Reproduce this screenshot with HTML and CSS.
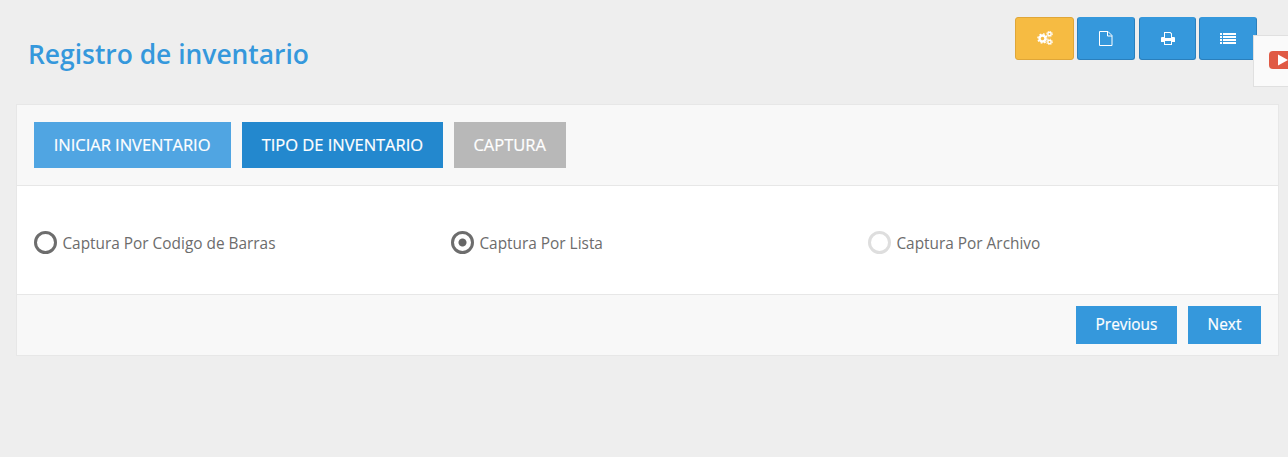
FILE: index.html
```html
<!DOCTYPE html>
<html lang="es">
<head>
  <meta charset="UTF-8" />
  <title>Registro de inventario</title>
  <link rel="stylesheet" href="styles.css">
</head>
<body>
  <div class="page-head">
    <h1 class="page-title">Registro de inventario</h1>
    <div class="head-actions">
      <button class="icon-btn icon-btn-warning btn-cogs">
        <svg width="16" height="14" viewBox="0 0 16 14" fill="none" stroke="#fff">
          <circle cx="5.5" cy="7.5" r="3" stroke-width="2.4"/>
          <circle cx="5.5" cy="7.5" r="4.6" stroke-width="1.4" stroke-dasharray="1.8 1.8"/>
          <circle cx="12.5" cy="3" r="1.7" stroke-width="1.5"/>
          <circle cx="12.5" cy="3" r="2.9" stroke-width="1" stroke-dasharray="1.2 1.1"/>
          <circle cx="12.5" cy="11" r="1.7" stroke-width="1.5"/>
          <circle cx="12.5" cy="11" r="2.9" stroke-width="1" stroke-dasharray="1.2 1.1"/>
        </svg>
      </button>
      <button class="icon-btn btn-file">
        <svg width="14" height="15" viewBox="0 0 14 15" fill="none" stroke="#fff" stroke-width="1">
          <path d="M.5 .5h8.500l4 4v10h-12.500z"/>
          <path d="M8.500 .5v4.500h4.500"/>
        </svg>
      </button>
      <button class="icon-btn btn-print">
        <svg width="14" height="13" viewBox="0 0 14 13" fill="#fff">
          <path d="M3 0h6.500l1.500 1.500v3.500h2a1 1 0 0 1 1 1v4h-3v3h-8v-3h-3v-4a1 1 0 0 1 1-1h2zM4 1v5h6v-4l-1-1zM4 9v3h6v-3z" fill-rule="evenodd"/>
        </svg>
      </button>
      <button class="icon-btn btn-list">
        <svg width="16" height="11" viewBox="0 0 16 11" fill="#fff">
          <path d="M0 0h2v2h-2zM3 0h13v2h-13zM0 3h2v2h-2zM3 3h13v2h-13zM0 6h2v2h-2zM3 6h13v2h-13zM0 9h2v2h-2zM3 9h13v2h-13z"/>
        </svg>
      </button>
    </div>
  </div>

  <!-- Video help tab -->
  <div class="video-tab">
    <svg width="24" height="18" viewBox="0 0 24 18">
      <rect width="24" height="18" rx="4" fill="#e05a45"/>
      <path d="M9 3.500l10 5.500-10 5.500z" fill="#fff"/>
    </svg>
  </div>

  <div class="panel">
    <div class="panel-tabs">
      <a href="#" class="tab tab-done">INICIAR INVENTARIO</a>
      <a href="#" class="tab tab-current">TIPO DE INVENTARIO</a>
      <a href="#" class="tab tab-disabled">CAPTURA</a>
    </div>

    <div class="panel-body">
      <label class="radio-item">
        <span class="radio"></span>
        Captura Por Codigo de Barras
      </label>
      <label class="radio-item">
        <span class="radio radio-checked"></span>
        Captura Por Lista
      </label>
      <label class="radio-item">
        <span class="radio radio-disabled"></span>
        Captura Por Archivo
      </label>
    </div>

    <div class="panel-footer">
      <a href="#" class="nav-btn">Previous</a>
      <a href="#" class="nav-btn btn-next">Next</a>
    </div>
  </div>
</body>
</html>
```

FILE: styles.css
```css
* {
  margin: 0;
  padding: 0;
  box-sizing: border-box;
}

body {
  font-family: "Open Sans", "Noto Sans", sans-serif;
  background-color: #eeeeee;
  height: 457px;
  overflow: hidden;
  position: relative;
  padding: 0 9px 0 16px;
}

a {
  text-decoration: none;
}

.page-head {
  display: flex;
  justify-content: space-between;
  align-items: flex-start;
  height: 104px;
  padding: 17px 22px 0 12px;
}

.page-title {
  font-size: 26.400px;
  line-height: 36px;
  font-weight: 600;
  color: #3598dc;
  margin-top: 19px;
}

.head-actions {
  display: flex;
}

.icon-btn {
  display: flex;
  align-items: center;
  justify-content: center;
  height: 43px;
  background-color: #3598dc;
  border: 1px solid #2a7fbc;
  border-top-color: #3598dc;
  border-radius: 3px;
}

.icon-btn svg {
  margin-top: -1px;
}

.icon-btn-warning {
  background-color: #f6bb42;
  border-color: #dfa638;
}

.btn-cogs {
  width: 59px;
  margin-right: 3px;
}

.btn-file {
  width: 58px;
  margin-right: 4px;
}

.btn-print {
  width: 57px;
  margin-right: 3px;
}

.btn-list {
  width: 58px;
}

.video-tab {
  position: absolute;
  top: 35px;
  left: 1253px;
  width: 40px;
  height: 52px;
  background-color: #fafafa;
  border: 1px solid #e0e0e0;
  padding: 15px 0 0 15px;
}

.video-tab svg {
  display: block;
}

.panel {
  height: 252px;
  background-color: #fff;
  border: 1px solid #e7e7e7;
}

.panel-tabs {
  display: flex;
  gap: 11px;
  height: 81px;
  padding: 17px 17px 0;
  background-color: #f8f8f8;
  border-bottom: 1px solid #e7e7e7;
}

.tab {
  height: 46px;
  line-height: 45px;
  padding: 0 19.700px;
  color: #fff;
  font-size: 16.500px;
  letter-spacing: -0.020px;
  -webkit-text-stroke: 0.2px #fff;
}

.tab-done {
  background-color: #50a5e2;
  padding-right: 20.500px;
}

.tab-current {
  background-color: #2388ce;
}

.tab-disabled {
  background-color: #b8b8b8;
  padding-right: 20.300px;
}

.panel-body {
  display: grid;
  grid-template-columns: repeat(3, 417px);
  align-items: center;
  height: 108px;
  padding: 6px 17px 0;
}

.radio-item {
  display: flex;
  align-items: center;
  gap: 5.400px;
  font-size: 15.400px;
  color: #6c6c6c;
}

.radio {
  width: 23px;
  height: 23px;
  margin-bottom: 2px;
  border: 3px solid #6d6d6d;
  border-radius: 50%;
  background-color: #fff;
}

.radio-checked {
  background: radial-gradient(circle, #666 0, #666 3.500px, #fff 4.500px);
}

.radio-disabled {
  border-color: #dedede;
}

.panel-footer {
  display: flex;
  justify-content: flex-end;
  gap: 11px;
  height: 61px;
  padding: 11px 17px 0 0;
  background-color: #f8f8f8;
  border-top: 1px solid #e7e7e7;
}

.nav-btn {
  width: 101px;
  height: 38px;
  line-height: 37px;
  text-align: center;
  background-color: #3598dc;
  color: #fff;
  font-size: 15.400px;
  -webkit-text-stroke: 0.2px #fff;
}

.btn-next {
  width: 73px;
}
```
